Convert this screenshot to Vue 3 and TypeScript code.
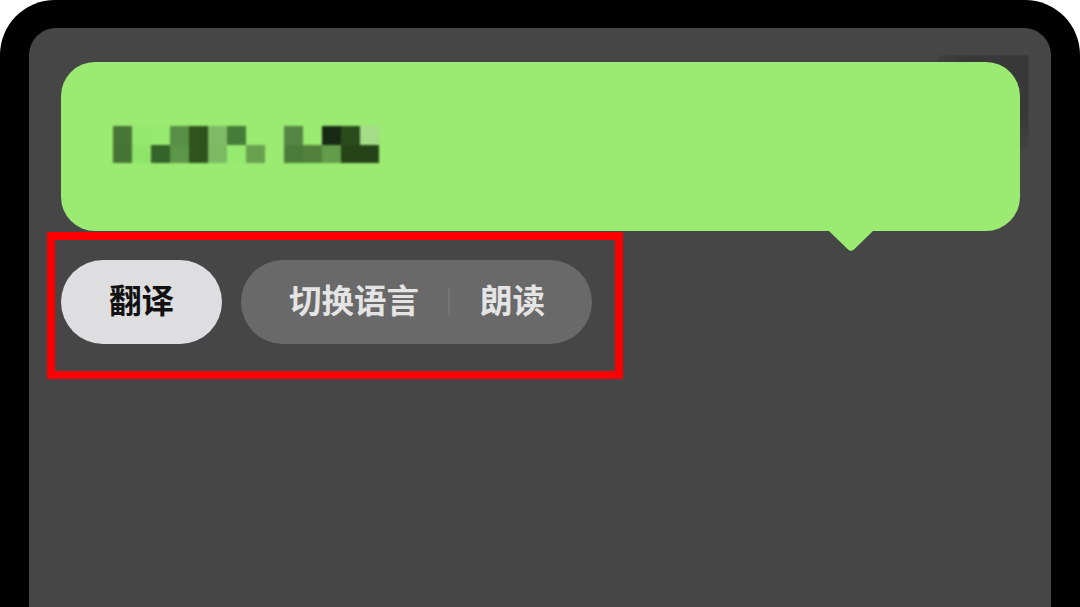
<script setup lang="ts">
interface Cell { col: number; row: number; color: string }
const palette: Array<[number, string, string]> = [
  [0, '#487636', '#467434'],
  [1, '#93e86d', '#8fe46a'],
  [2, '#97e970', '#35632a'],
  [3, '#598f46', '#5c9649'],
  [4, '#30531d', '#2f531d'],
  [5, '#7fbb67', '#7bb963'],
  [6, '#437d37', '#97ea70'],
  [7, '#9bea72', '#69a24f'],
  [9, '#558643', '#4d7c3a'],
  [10, '#9bea72', '#53813c'],
  [11, '#182a14', '#639d4c'],
  [12, '#2a4c1c', '#254318'],
  [13, '#a4dc8a', '#254318']
]
const cells: Cell[] = palette.flatMap(([col, top, bottom]) => [
  { col, row: 1, color: top },
  { col, row: 2, color: bottom }
])
</script>

<template>
  <div class="screen">
    <div class="panel">
      <div class="ghost"></div>
      <div class="bubble">
        <div class="mosaic">
          <span
            v-for="c in cells"
            :key="`${c.col}-${c.row}`"
            class="cell"
            :style="{ gridColumn: c.col + 1, gridRow: c.row, background: c.color }"
          ></span>
        </div>
        <svg class="tail" width="44" height="21" viewBox="0 0 44 21" aria-hidden="true">
          <path d="M0 0H44L25 18.5Q22 21 19 18.5Z" fill="#9bea72" />
        </svg>
      </div>
      <div class="marked">
        <button class="pill light">翻译</button>
        <div class="pill dark">
          <span class="action first">切换语言</span>
          <span class="divider"></span>
          <span class="action">朗读</span>
        </div>
      </div>
    </div>
  </div>
</template>

<style>
html, body { margin: 0; background: #fff; }
</style>

<style scoped>
.screen {
  width: 1080px;
  height: 607px;
  box-sizing: border-box;
  padding: 28px 29px 0;
  background: #000;
  border-radius: 55px 55px 0 0;
  overflow: hidden;
  font-family: "Noto Sans CJK SC", "Noto Sans", sans-serif;
}
.panel {
  position: relative;
  height: 579px;
  box-sizing: border-box;
  padding: 34px 31px 0 32px;
  background: #464647;
  border-radius: 27px 27px 0 0;
}
.ghost {
  position: absolute;
  left: 908px;
  top: 27px;
  width: 92px;
  height: 95px;
  background: linear-gradient(90deg, #404040 0%, #393838 30%, #383838 100%);
  -webkit-mask-image: linear-gradient(180deg, #000 60%, rgba(0, 0, 0, 0.2) 100%);
  mask-image: linear-gradient(180deg, #000 60%, rgba(0, 0, 0, 0.2) 100%);
  filter: blur(1.5px);
}
.bubble {
  position: relative;
  height: 169px;
  background: #9bea72;
  border-radius: 34px;
}
.mosaic {
  position: absolute;
  left: 52px;
  top: 64px;
  display: grid;
  grid-template-columns: repeat(14, 19px);
  grid-template-rows: repeat(2, 18.5px);
  filter: blur(0.8px);
}
.tail {
  position: absolute;
  left: 768px;
  top: 169px;
  display: block;
}
.marked {
  display: flex;
  align-items: flex-start;
  gap: 19px;
  width: 576px;
  height: 147px;
  box-sizing: border-box;
  margin: 1px 0 0 -14px;
  padding: 20px 0 0 6px;
  border: 8px solid #fa0000;
}
.pill {
  height: 84px;
  border-radius: 42px;
  font-size: 32.5px;
  font-weight: 700;
  line-height: 78px;
}
.light {
  width: 161px;
  padding: 0 0 6px;
  border: 0;
  background: #dedee0;
  color: #111;
  font-family: inherit;
  text-align: center;
}
.dark {
  display: flex;
  align-items: center;
  width: 351px;
  box-sizing: border-box;
  padding-left: 48px;
  background: #69696a;
  color: #e4e4e4;
}
.action {
  margin-bottom: 6px;
}
.action.first {
  width: 130px;
}
.divider {
  width: 2px;
  height: 28px;
  margin: 0 30px 0 29px;
  background: #757576;
}
</style>
